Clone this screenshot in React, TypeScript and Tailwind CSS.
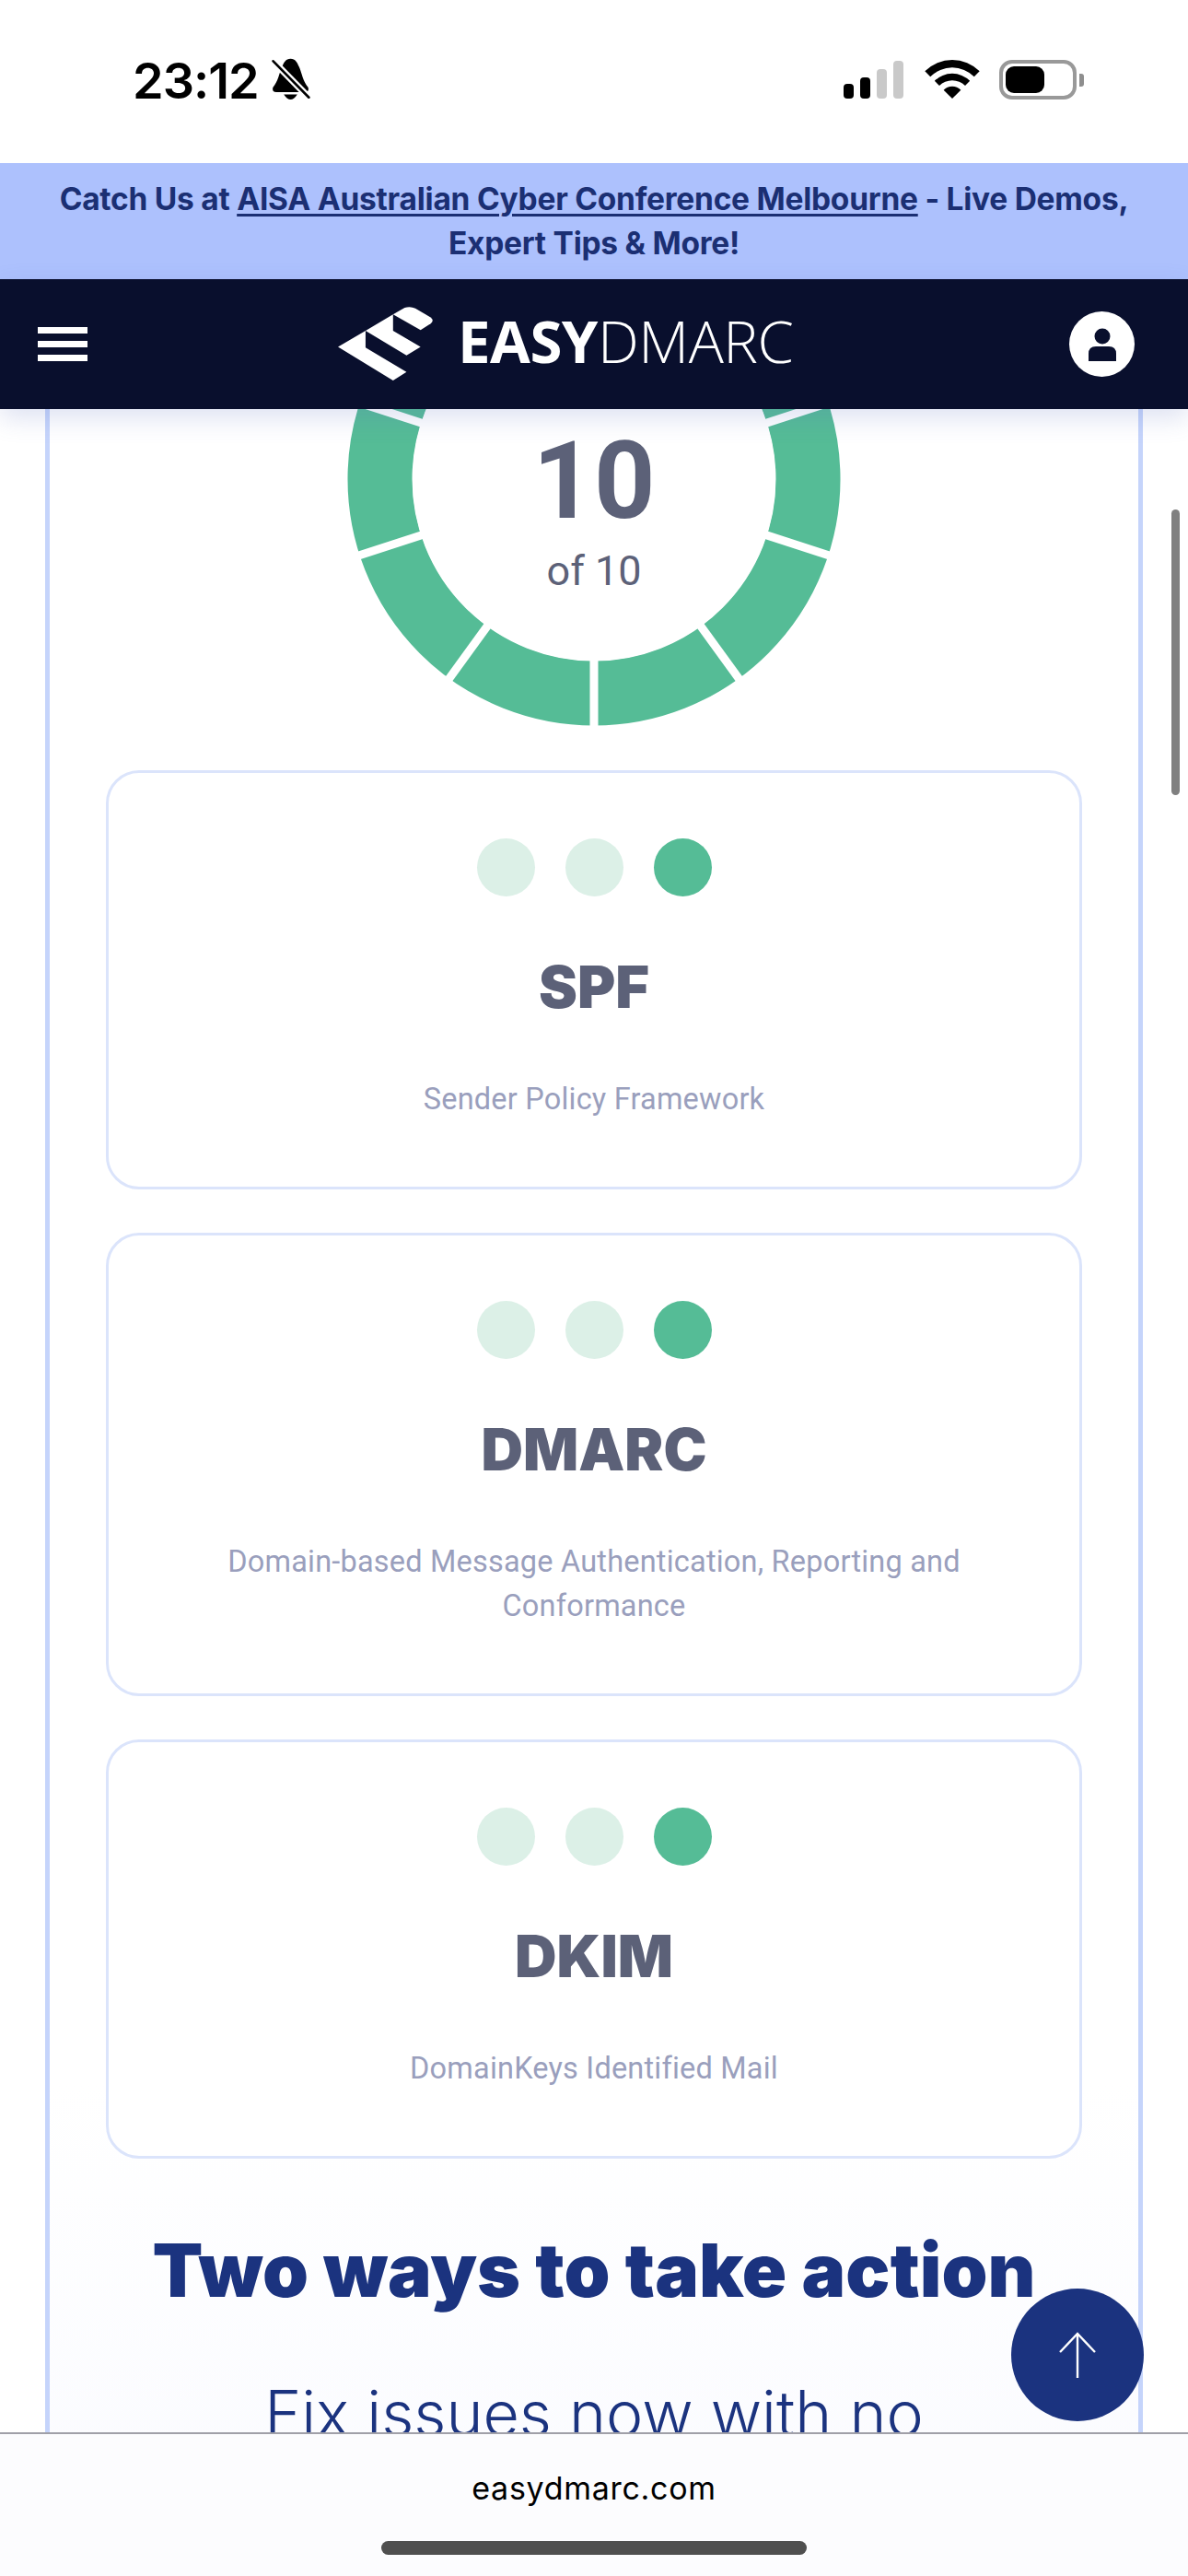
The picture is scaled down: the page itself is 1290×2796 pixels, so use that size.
const INTER = "font-['Inter','Liberation_Sans',sans-serif]";

function BellSlash() {
  return (
    <svg viewBox="526 43 128 142" className="ml-[13px] mt-[-2px] h-[47px] w-[43px]">
      <path d="M590 45C606 45 612 58 618 72C628 95 630 118 648 140Q652 155 636 155L544 155Q528 155 532 140C550 118 552 95 562 72C568 58 574 45 590 45Z" fill="#000" />
      <path d="M568 162Q590 196 612 162Z" fill="#000" />
      <line x1="530" y1="50" x2="652" y2="174" stroke="#fff" strokeWidth="22" />
      <line x1="533" y1="53" x2="650" y2="172" stroke="#000" strokeWidth="8" strokeLinecap="round" />
    </svg>
  );
}

function Wifi() {
  return (
    <svg viewBox="368 45 180 127" className="h-[42px] w-[60px]">
      <path d="M368.2 82.2A127 127 0 0 1 547.8 82.2L529.9 99.9A102 102 0 0 0 386.1 99.9Z" fill="#000" />
      <path d="M400 114A82 82 0 0 1 516 114L500.4 129.6A60 60 0 0 0 415.6 129.6Z" fill="#000" />
      <path d="M458 172L429.7 143.7A40 40 0 0 1 486.3 143.7Z" fill="#000" />
    </svg>
  );
}

function StatusBar() {
  return (
    <div className="flex h-[177px] shrink-0 bg-white">
      <div className="ml-[144px] mt-[55px] flex h-[65px] items-center">
        <span className={`${INTER} text-[54px] font-semibold leading-none tracking-[-1px] text-black`}>23:12</span>
        <BellSlash />
      </div>
      <div className="ml-auto mr-[113px] mt-[65px] flex h-[43px] items-start">
        <div className="mr-[23px] mt-px flex h-[41px] items-end gap-[7px]">
          <div className="h-[16px] w-[11px] rounded-[4px] bg-black" />
          <div className="h-[23px] w-[11px] rounded-[4px] bg-black" />
          <div className="h-[32px] w-[11px] rounded-[4px] bg-[#c9c9c9]" />
          <div className="h-[41px] w-[11px] rounded-[4px] bg-[#c9c9c9]" />
        </div>
        <Wifi />
        <div className="ml-[21px] flex h-[43px] w-[84px] items-center rounded-[14px] border-[4px] border-[#999999] pl-[3px]">
          <div className="h-[29px] w-[42px] rounded-[9px] bg-black" />
        </div>
        <div className="ml-[3px] mt-[15px] h-[14px] w-[5px] rounded-r-[3px] bg-[#8e8e8e]" />
      </div>
    </div>
  );
}

function Banner() {
  return (
    <div className={`${INTER} flex h-[126px] shrink-0 flex-col items-center justify-center bg-[#adc1fd] text-center text-[33.5px] font-bold leading-[48px] tracking-[-0.25px] text-[#1b2f73]`}>
      <p className="whitespace-nowrap">
        Catch Us at <span className="underline decoration-[3px] underline-offset-[4px]">AISA Australian Cyber Conference Melbourne</span> - Live Demos,
      </p>
      <p className="whitespace-nowrap">Expert Tips &amp; More!</p>
    </div>
  );
}

function Logo() {
  return (
    <div className="flex items-center">
      <svg viewBox="82 54 316 244" className="mt-[-2px] h-[81px] w-[105px] shrink-0">
        <path d="M82 188L172 135L172 190L306 270L262 298Z" fill="#fff" />
        <path d="M172 135L262 82L262 135L352 188L306 216Z" fill="#fff" />
        <path d="M262 82L300 60Q318 54 335 62L385 92Q398 102 385 112L352 133Z" fill="#fff" />
      </svg>
      <span className="ml-[25px] mt-[-8px] whitespace-nowrap font-['Open_Sans',sans-serif] text-[63.5px] leading-none tracking-[-0.5px] text-white">
        <span className="font-bold">EASY</span>
        <span className="font-light">DMARC</span>
      </span>
    </div>
  );
}

function Header() {
  return (
    <header className="relative z-10 flex h-[141px] shrink-0 items-center bg-[#090f2d] pl-[41px] pr-[58px] shadow-[0_10px_26px_rgba(90,110,190,0.2)]">
      <div className="flex w-[54px] flex-col gap-[8px]">
        <div className="h-[7px] bg-white" />
        <div className="h-[7px] bg-white" />
        <div className="h-[7px] bg-white" />
      </div>
      <div className="ml-[272px]">
        <Logo />
      </div>
      <div className="ml-auto flex h-[71px] w-[71px] items-center justify-center rounded-full bg-white">
        <svg viewBox="0 0 32 36" className="h-[36px] w-[32px]">
          <circle cx="16" cy="9" r="8.5" fill="#090f2d" />
          <path d="M1 36L1 28Q1 20 9 20L23 20Q31 20 31 28L31 36Z" fill="#090f2d" />
        </svg>
      </div>
    </header>
  );
}

function Ring() {
  const spokes = [0, 36, 72, 108, 144];
  return (
    <div className="relative h-[344px] w-[540px] shrink-0">
      <svg viewBox="-270 -76 540 344" className="h-[344px] w-[540px]">
        <circle cx="0" cy="0" r="232.5" fill="none" stroke="#55bc96" strokeWidth="70" />
        {spokes.map((a) => (
          <line key={a} x1="0" y1="-280" x2="0" y2="280" stroke="#ffffff" strokeWidth="9" transform={`rotate(${a})`} />
        ))}
        <circle cx="0" cy="0" r="197" fill="#ffffff" />
      </svg>
      <div className="absolute inset-x-0 top-[20px] flex flex-col items-center font-['Roboto',sans-serif] text-[#5c6178]">
        <span className="text-[116px] font-bold leading-[116px]">10</span>
        <span className="mt-[14px] text-[45px] leading-[52px]">of 10</span>
      </div>
    </div>
  );
}

function Card({ title, lines }: { title: string; lines: string[] }) {
  return (
    <div className="flex flex-col items-center rounded-[36px] border-[3px] border-[#dbe4fb] bg-white pb-[71px] pt-[71px] text-center">
      <div className="flex gap-[33px]">
        <div className="h-[63px] w-[63px] rounded-full bg-[#dcf0e7]" />
        <div className="h-[63px] w-[63px] rounded-full bg-[#dcf0e7]" />
        <div className="h-[63px] w-[63px] rounded-full bg-[#55bc96]" />
      </div>
      <h3 className={`${INTER} mt-[60px] text-[63px] font-black leading-[76px] text-[#5c6178]`}>{title}</h3>
      <div className="mt-[60px] font-['Roboto',sans-serif] text-[32.5px] leading-[48px] tracking-[0.2px] text-[#9a9fbd]">
        {lines.map((l) => (
          <p key={l} className="whitespace-nowrap">{l}</p>
        ))}
      </div>
    </div>
  );
}

export default function App() {
  return (
    <div className="relative flex h-[2796px] w-[1290px] flex-col overflow-hidden bg-white">
      <StatusBar />
      <Banner />
      <Header />
      <main className="min-h-0 flex-1 overflow-hidden px-[49px]">
        <div className="flex flex-col items-center border-x-[5px] border-[#c5d4fb] bg-linear-to-b from-white from-75% to-[#f9faff] px-[61px] pb-[200px]">
          <Ring />
          <div className="mt-[48px] flex w-full flex-col gap-[47px]">
            <Card title="SPF" lines={["Sender Policy Framework"]} />
            <Card title="DMARC" lines={["Domain-based Message Authentication, Reporting and", "Conformance"]} />
            <Card title="DKIM" lines={["DomainKeys Identified Mail"]} />
          </div>
          <h2 className={`${INTER} mt-[71px] whitespace-nowrap text-[80px] font-black leading-[100px] tracking-[0.1px] text-[#1b337f]`}>
            Two ways to take action
          </h2>
          <p className={`${INTER} mt-[60px] whitespace-nowrap text-[68px] font-light leading-[90px] text-[#1b337f]`}>
            Fix issues now with no
          </p>
        </div>
      </main>
      <footer className="flex h-[156px] shrink-0 flex-col items-center border-t-2 border-[#a0a0a8] bg-[#fcfcfe]">
        <span className={`${INTER} mt-[37px] text-[34px] leading-[44px] tracking-[0.7px] text-black`}>easydmarc.com</span>
        <div className="mt-[35px] h-[15px] w-[462px] rounded-full bg-[#4f4f4f]" />
      </footer>
      <div className="absolute left-[1272px] top-[553px] h-[310px] w-[9px] rounded-full bg-[#808080]" />
      <div className="absolute left-[1098px] top-[2484px] flex h-[144px] w-[144px] items-center justify-center rounded-full bg-[#1b337f]">
        <svg viewBox="0 0 42 50" className="h-[50px] w-[42px]" fill="none" stroke="#fff" strokeWidth="2.4">
          <path d="M21 50L21 2" />
          <path d="M2 22L21 2L40 22" />
        </svg>
      </div>
    </div>
  );
}
